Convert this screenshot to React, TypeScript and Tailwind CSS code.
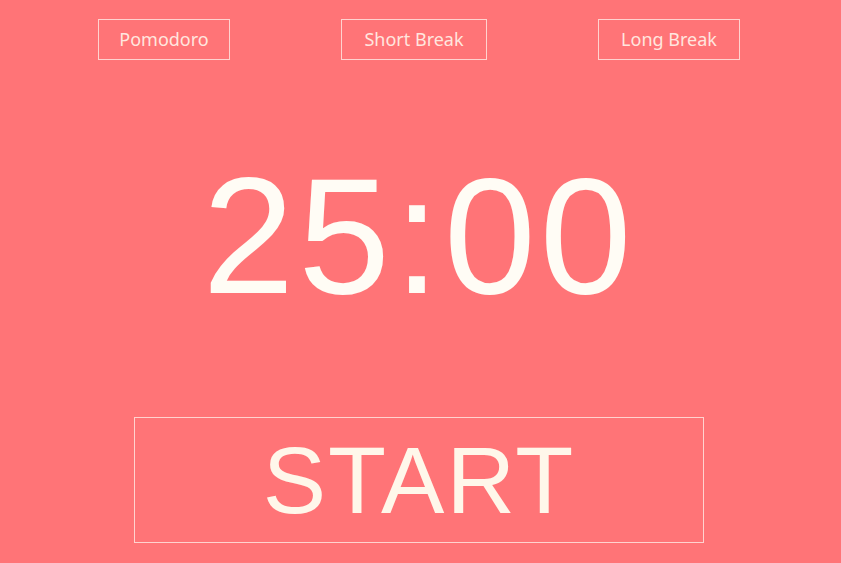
export default function App() {
  return (
    <div className="w-[841px] h-[563px] bg-[#ff7477] overflow-hidden flex flex-col items-center pr-[3px]">
      <div className="mt-[19px] flex justify-center gap-[111px] text-[18px] text-[#ffe6df]" style={{ fontFamily: '"Noto Sans", "Open Sans", sans-serif' }}>
        <button className="w-[132px] h-[41px] border border-[#ffd3cf] flex items-center justify-center">Pomodoro</button>
        <button className="w-[146px] h-[41px] border border-[#ffd3cf] flex items-center justify-center">Short Break</button>
        <button className="w-[142px] h-[41px] border border-[#ffd3cf] flex items-center justify-center">Long Break</button>
      </div>
      <div className="mt-[94px] h-[170px] text-[165px] leading-none tracking-[4px] text-[#fffcf5]" style={{ fontFamily: '"Liberation Sans", Arial, sans-serif' }}>
        25:00
      </div>
      <button className="mt-[93px] w-[570px] h-[126px] border border-[#ffd3cf] flex items-center justify-center text-[95px] leading-none tracking-[2px] text-[#fff7ea]" style={{ fontFamily: '"Liberation Sans", Arial, sans-serif' }}>
        START
      </button>
    </div>
  );
}
